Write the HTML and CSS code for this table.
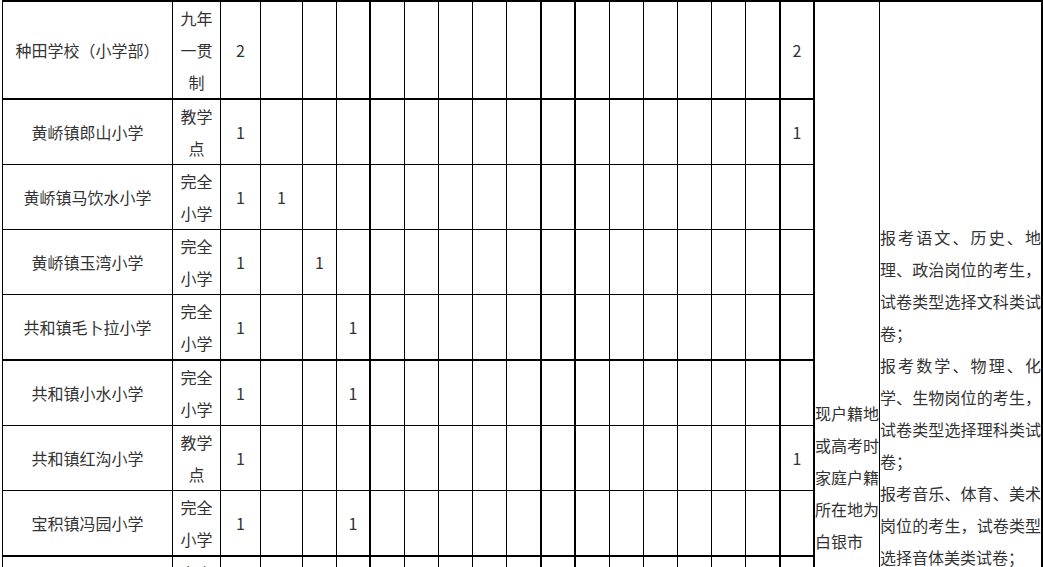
FILE: index.html
```html
<!DOCTYPE html>
<html lang="zh-CN">
<head>
<meta charset="utf-8">
<title>岗位表</title>
<link rel="stylesheet" href="styles.css">
</head>
<body>
<div class="viewport">
<table class="sheet">
<colgroup>
<col class="w-name"><col class="w-type"><col class="w-total"><col class="w-c4">
<col class="w-s"><col class="w-s"><col class="w-s"><col class="w-s"><col class="w-s"><col class="w-s">
<col class="w-s5"><col class="w-s"><col class="w-s"><col class="w-s"><col class="w-s"><col class="w-s"><col class="w-s">
<col class="w-s5"><col class="w-s"><col class="w-req"><col class="w-note">
</colgroup>
<tbody>
<tr class="sep">
<td class="name">种田学校（小学部）</td><td class="type">九年一贯制</td><td>2</td>
<td></td><td></td><td></td><td></td><td></td><td></td><td></td><td></td><td></td><td></td><td></td><td></td><td></td><td></td><td></td>
<td>2</td>
<td class="req" rowspan="9">现户籍地或高考时家庭户籍所在地为白银市</td>
<td class="note" rowspan="9"><p>报考语文、历史、地理、政治岗位的考生，试卷类型选择文科类试卷；</p><p>报考数学、物理、化学、生物岗位的考生，试卷类型选择理科类试卷；</p><p>报考音乐、体育、美术岗位的考生，试卷类型选择音体美类试卷；</p></td>
</tr>
<tr>
<td class="name">黄峤镇郎山小学</td><td class="type">教学点</td><td>1</td>
<td></td><td></td><td></td><td></td><td></td><td></td><td></td><td></td><td></td><td></td><td></td><td></td><td></td><td></td><td></td>
<td>1</td>
</tr>
<tr>
<td class="name">黄峤镇马饮水小学</td><td class="type">完全小学</td><td>1</td>
<td>1</td><td></td><td></td><td></td><td></td><td></td><td></td><td></td><td></td><td></td><td></td><td></td><td></td><td></td><td></td>
<td></td>
</tr>
<tr>
<td class="name">黄峤镇玉湾小学</td><td class="type">完全小学</td><td>1</td>
<td></td><td>1</td><td></td><td></td><td></td><td></td><td></td><td></td><td></td><td></td><td></td><td></td><td></td><td></td><td></td>
<td></td>
</tr>
<tr class="sep">
<td class="name">共和镇毛卜拉小学</td><td class="type">完全小学</td><td>1</td>
<td></td><td></td><td>1</td><td></td><td></td><td></td><td></td><td></td><td></td><td></td><td></td><td></td><td></td><td></td><td></td>
<td></td>
</tr>
<tr>
<td class="name">共和镇小水小学</td><td class="type">完全小学</td><td>1</td>
<td></td><td></td><td>1</td><td></td><td></td><td></td><td></td><td></td><td></td><td></td><td></td><td></td><td></td><td></td><td></td>
<td></td>
</tr>
<tr>
<td class="name">共和镇红沟小学</td><td class="type">教学点</td><td>1</td>
<td></td><td></td><td></td><td></td><td></td><td></td><td></td><td></td><td></td><td></td><td></td><td></td><td></td><td></td><td></td>
<td>1</td>
</tr>
<tr class="sep">
<td class="name">宝积镇冯园小学</td><td class="type">完全小学</td><td>1</td>
<td></td><td></td><td>1</td><td></td><td></td><td></td><td></td><td></td><td></td><td></td><td></td><td></td><td></td><td></td><td></td>
<td></td>
</tr>
<tr>
<td class="name"></td><td class="type">完全小学</td><td></td>
<td></td><td></td><td></td><td></td><td></td><td></td><td></td><td></td><td></td><td></td><td></td><td></td><td></td><td></td><td></td>
<td></td>
</tr>
</tbody>
</table>
</div>
</body>
</html>
```
FILE: styles.css
```css
html, body {
  margin: 0;
  padding: 0;
  background: #fff;
  overflow: hidden;
}

.viewport {
  height: 567px;
  overflow: hidden;
}

.sheet {
  margin-left: 2px;
  width: 1041px;
  table-layout: fixed;
  border-collapse: separate;
  border-spacing: 0;
  border-top: 2px solid #000;
  border-left: 1px solid #000;
  font-family: "Noto Sans CJK SC", "Microsoft YaHei", sans-serif;
  font-size: 16px;
  line-height: 32px;
  color: #333;
}

.w-name { width: 170px; }
.w-type { width: 48px; }
.w-total { width: 40px; }
.w-c4 { width: 42px; }
.w-s { width: 34px; }
.w-s5 { width: 35px; }
.w-req { width: 65px; }
.w-note { width: 163px; }

.sheet td {
  box-sizing: border-box;
  padding: 0;
  border-right: 1px solid #000;
  border-bottom: 1px solid #000;
  text-align: center;
  vertical-align: middle;
  overflow: hidden;
}

.sheet td:nth-child(6),
.sheet td:nth-child(11),
.sheet td:nth-child(12),
.sheet td:nth-child(18),
.sheet td:nth-child(19) {
  border-right-width: 2px;
}

.sheet tr.sep td {
  border-bottom-width: 2px;
}

.sheet td.req {
  border-right-width: 1px;
  text-align: left;
  vertical-align: top;
  padding-top: 395px;
}

.sheet td.note {
  border-right-width: 2px;
  text-align: justify;
  vertical-align: top;
  padding-top: 219px;
}

.note p {
  margin: 0;
}
```
